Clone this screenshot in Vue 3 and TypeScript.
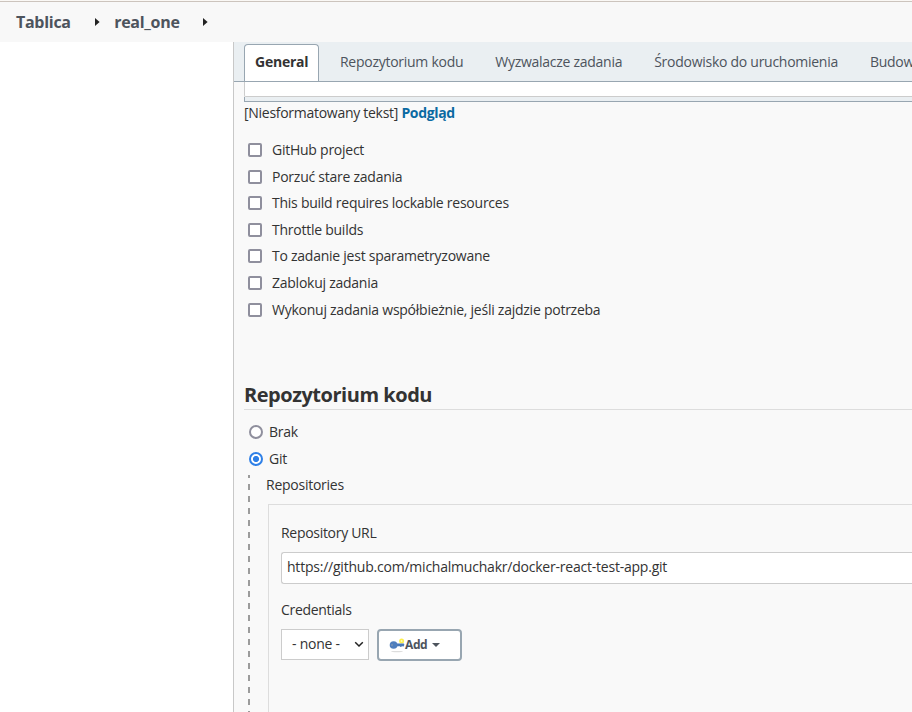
<script setup lang="ts">
const crumbs: string[] = ['Tablica', 'real_one']
const tabs: string[] = [
  'General',
  'Repozytorium kodu',
  'Wyzwalacze zadania',
  'Środowisko do uruchomienia',
  'Budow',
]
const options: string[] = [
  'GitHub project',
  'Porzuć stare zadania',
  'This build requires lockable resources',
  'Throttle builds',
  'To zadanie jest sparametryzowane',
  'Zablokuj zadania',
  'Wykonuj zadania współbieżnie, jeśli zajdzie potrzeba',
]
const scm: { label: string; on: boolean }[] = [
  { label: 'Brak', on: false },
  { label: 'Git', on: true },
]
</script>

<template>
  <div class="page">
    <header class="crumbs">
      <template v-for="c in crumbs" :key="c">
        <a class="crumb">{{ c }}</a>
        <svg class="arrow" width="5" height="8" viewBox="0 0 5 8"><path d="M0 0L4.6 4L0 8Z" fill="#222" /></svg>
      </template>
    </header>
    <div class="body">
      <aside class="side"></aside>
      <main class="main">
        <nav class="tabs">
          <a v-for="(t, i) in tabs" :key="t" class="tab" :class="{ active: i === 0 }">{{ t }}</a>
        </nav>
        <div class="content">
          <div class="textarea"></div>
          <div class="handle"></div>
          <p class="format">[Niesformatowany tekst] <a class="preview">Podgląd</a></p>
          <div class="options">
            <label v-for="o in options" :key="o" class="option"><span class="box"></span>{{ o }}</label>
          </div>
          <h2 class="title">Repozytorium kodu</h2>
          <div class="radios">
            <label v-for="s in scm" :key="s.label" class="radio"><span class="dot" :class="{ on: s.on }"></span>{{ s.label }}</label>
          </div>
          <section class="git">
            <div class="rail"></div>
            <div class="repos">
              <div class="label">Repositories</div>
              <div class="card">
                <div class="field">Repository URL</div>
                <div class="input">https://github.com/michalmuchakr/docker-react-test-app.git</div>
                <div class="field cred">Credentials</div>
                <div class="row">
                  <div class="select">
                    <span>- none -</span>
                    <svg width="10" height="7" viewBox="0 0 10 7"><path d="M1.2 1.2L5 5L8.8 1.2" fill="none" stroke="#222" stroke-width="1.5" /></svg>
                  </div>
                  <button class="add" type="button">
                    <svg class="key" width="16" height="16" viewBox="0 0 16 16">
                      <ellipse cx="8" cy="14.6" rx="6" ry="0.7" fill="#ddd" />
                      <circle cx="12.6" cy="4" r="2.5" fill="#fdf04c" />
                      <circle cx="12.6" cy="4" r="0.9" fill="#fffbb8" />
                      <path d="M6 6.4H14.8L15.4 7.8L14.6 9.4H13.4V9H12.6V9.9H11.2V9.2H6Z" fill="#4a79b6" />
                      <ellipse cx="4.6" cy="8" rx="3.9" ry="3.8" fill="#4f7fbd" />
                      <circle cx="3" cy="8" r="1" fill="#7b95b5" />
                    </svg>
                    <span>Add</span>
                    <svg class="caret" width="8" height="4" viewBox="0 0 8 4"><path d="M0 0H8L4 4Z" fill="#4d545d" /></svg>
                  </button>
                </div>
              </div>
            </div>
          </section>
        </div>
      </main>
    </div>
  </div>
</template>

<style>
body { margin: 0; overflow: hidden; }
</style>

<style scoped>
.page {
  box-sizing: border-box;
  width: 100vw;
  height: 712px;
  overflow: hidden;
  display: flex;
  flex-direction: column;
  background: #fff;
  color: #333;
  font: 14px/20px "Open Sans", "Noto Sans", sans-serif;
  letter-spacing: -0.25px;
}
.crumbs {
  box-sizing: border-box;
  height: 42px;
  flex: none;
  border-top: 1px solid #faf8f5;
  box-shadow: inset 0 1px #ccc4bd;
  background: #f8f8f8;
  display: flex;
  align-items: center;
  padding: 0 0 0 16px;
}
.crumb { font-size: 16px; font-weight: 700; color: #4d545d; letter-spacing: -0.28px; }
.arrow { margin: 0 14.6px 0 23.8px; }
.body { flex: 1; display: flex; min-height: 0; }
.side { width: 233px; flex: none; }
.main { flex: 1; min-width: 0; border-left: 1px solid #c8c8c8; background: #f9f9f9; }
.tabs {
  box-sizing: border-box;
  height: 40px;
  display: flex;
  align-items: flex-start;
  gap: 10px;
  padding: 2px 0 0 10px;
  background: #eaeff2;
  border-bottom: 1px solid #98a6b1;
  overflow: hidden;
}
.tab {
  box-sizing: border-box;
  height: 37px;
  padding: 7px 10px 0;
  border: 1px solid transparent;
  color: #4d545d;
  white-space: nowrap;
  letter-spacing: -0.27px;
}
.active {
  width: 75px;
  background: #fff;
  border-color: #98a6b1;
  border-bottom: 0;
  border-radius: 4px 4px 0 0;
  color: #333;
  font-weight: 700;
  letter-spacing: -0.24px;
}
.content { padding-left: 10px; }
.textarea { height: 14px; background: #fff; border: 1px solid #ccc; border-width: 0 0 1px 1px; border-radius: 0 0 0 2px; }
.handle { height: 4px; background: #eaeff2; border: 1px solid #98a6b1; border-width: 0 0 1px 1px; }
.format { margin: 1px 0 0; letter-spacing: -0.28px; }
.preview { color: #0b6aa2; font-weight: 700; letter-spacing: -0.36px; }
.options { margin-top: 13.72px; }
.option { height: 26.6px; display: flex; align-items: center; }
.box {
  box-sizing: border-box;
  width: 14px;
  height: 14px;
  margin: 0 10px 0 4px;
  border: 2px solid #8f8f9d;
  border-radius: 2px;
  background: #fff;
}
.title {
  box-sizing: border-box;
  height: 32px;
  margin: 54.9px 0 0;
  border-bottom: 1px solid #ddd;
  font-size: 20px;
  line-height: 34px;
  letter-spacing: -0.47px;
}
.radios { margin-top: 9px; }
.radio { height: 27px; display: flex; align-items: center; }
.dot {
  box-sizing: border-box;
  width: 14px;
  height: 14px;
  margin: 0 6px 0 5px;
  border: 2px solid #8f8f9d;
  border-radius: 50%;
  background: #fff;
}
.on { border-color: #2f80e7; background: radial-gradient(circle, #2f80e7 2.7px, #fff 3.4px); }
.git { display: flex; height: 237px; margin-top: 2px; }
.rail {
  width: 2px;
  flex: none;
  margin-left: 4px;
  background: repeating-linear-gradient(#9b9b9b 0 6px, transparent 6px 11.95px) 0 -3px / 2px 300px;
}
.repos { flex: 1; min-width: 0; padding-left: 16px; }
.label { height: 29px; }
.card { margin-left: 2px; height: 220px; border: 1px solid #ddd; border-width: 1px 0 0 1px; padding: 18px 0 0 12px; }
.field { height: 29px; letter-spacing: -0.3px; }
.input {
  box-sizing: border-box;
  height: 32px;
  padding: 4px 5px;
  border: 1px solid #ccc;
  border-right: 0;
  border-radius: 3px 0 0 3px;
  background: #fff;
  letter-spacing: -0.22px;
}
.cred { margin-top: 16px; }
.row { display: flex; gap: 8px; }
.select {
  box-sizing: border-box;
  width: 88px;
  height: 31px;
  border: 1px solid #ccc;
  background: #fff;
  display: flex;
  align-items: center;
  justify-content: space-between;
  padding: 0 4px 0 10px;
}
.add {
  box-sizing: border-box;
  width: 85px;
  height: 32px;
  padding: 0 0 0 10px;
  border: 2px solid #98a6b1;
  border-radius: 4px;
  background: #fff;
  display: flex;
  align-items: center;
  font: 700 12px/20px "Open Sans", "Noto Sans", sans-serif;
  letter-spacing: -0.4px;
  color: #4d545d;
}
.caret { margin-left: 5px; }
</style>
